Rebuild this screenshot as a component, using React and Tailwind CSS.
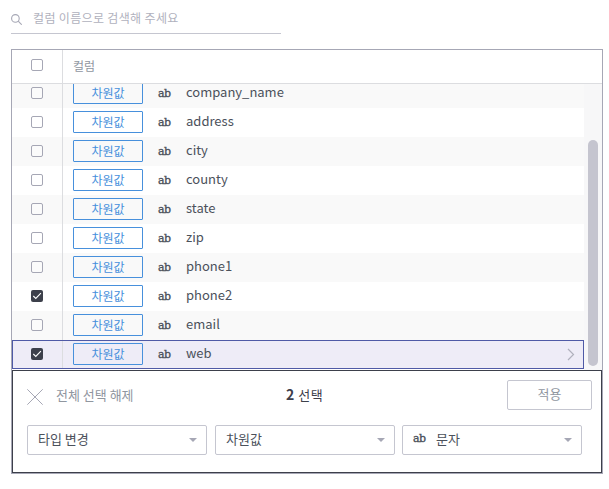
const columns = [
  { name: 'company_name' },
  { name: 'address' },
  { name: 'city' },
  { name: 'county' },
  { name: 'state' },
  { name: 'zip' },
  { name: 'phone1' },
  { name: 'phone2', checked: true },
  { name: 'email' },
  { name: 'web', checked: true, selected: true },
];

function Checkbox({ checked }) {
  if (checked) {
    return (
      <span className="flex size-3 items-center justify-center rounded-xs bg-[#3d404b]">
        <svg width="10" height="8" viewBox="0 0 10 8" fill="none" stroke="#fff" strokeWidth="1.1">
          <path d="M1.3 4 3.8 6.4 8.9 1.2" />
        </svg>
      </span>
    );
  }
  return <span className="block size-3 rounded-xs border border-[#a6a7b5] bg-white/40" />;
}

function TextTypeIcon() {
  return (
    <span className="block w-[14px] whitespace-nowrap font-['DejaVu_Serif',serif] text-[11px] leading-[14px] tracking-[-0.5px] text-[#4b515b] [-webkit-text-stroke:0.35px_#4b515b]">
      ab
    </span>
  );
}

function Row({ name, checked, selected }) {
  return (
    <div
      className={
        selected
          ? 'relative flex h-[29px] shrink-0 bg-[#eeecf7]'
          : 'flex h-[29px] shrink-0 odd:bg-[#f9f9f9]'
      }
    >
      <div className="flex w-[51px] justify-center border-r border-[#dcdde0] pt-2">
        <Checkbox checked={checked} />
      </div>
      <div className="flex flex-1 items-start pl-[10px]">
        <div className="mt-[3px] h-[22px] w-[70px] rounded-[1px] border border-[#4790dc] text-center text-[12px] leading-[19px] text-[#4790dc]">
          차원값
        </div>
        <div className="mt-[8px] ml-[15px]">
          <TextTypeIcon />
        </div>
        <div className="ml-[14px] text-[13px] leading-[25px] text-[#4b515b]">{name}</div>
        {selected && (
          <svg className="mt-[8px] mr-[9px] ml-auto" width="8" height="13" viewBox="0 0 8 13" fill="none" stroke="#b0b1bd" strokeWidth="1.2">
            <path d="M1 1 6.5 6.5 1 12" />
          </svg>
        )}
      </div>
      {selected && <div className="pointer-events-none absolute inset-0 border border-[#4f5aa6]" />}
    </div>
  );
}

function Select({ children, className = '' }) {
  return (
    <div className={`flex h-[30px] w-[180px] items-center rounded-xs border border-[#c5c6d0] bg-white pr-[9px] pb-[2px] pl-[10px] text-[13px] text-[#4b515b] ${className}`}>
      {children}
      <svg className="mt-[2px] ml-auto" width="8" height="4" viewBox="0 0 8 4" fill="#a6a7b5">
        <path d="M0 0h8L4 4z" />
      </svg>
    </div>
  );
}

export default function App() {
  return (
    <div className="h-[489px] w-[609px] overflow-hidden bg-white pl-[11px] font-['Noto_Sans_CJK_KR',sans-serif]">
      <div className="flex h-[34px] w-[270px] border-b border-[#c5c6d0]">
        <svg className="mt-[14px]" width="11" height="11" viewBox="0 0 11 11" fill="none" stroke="#a6a7b5" strokeWidth="1.1">
          <circle cx="4.4" cy="4.4" r="3.8" />
          <path d="m7.2 7.2 3.5 3.5" />
        </svg>
        <span className="mt-[8px] ml-[11px] text-[12px] leading-[20px] tracking-[0.34px] text-[#b0b1bd]">컬럼 이름으로 검색해 주세요</span>
      </div>

      <div className="mt-[15px] flex h-[425px] w-[592px] flex-col border border-[#a6a7b5]">
        <div className="flex h-[34px] shrink-0 border-b border-[#dcdde0]">
          <div className="flex w-[51px] justify-center border-r border-[#dcdde0] pt-[9px]">
            <Checkbox />
          </div>
          <span className="pt-[6px] pl-[10px] text-[12px] leading-[20px] text-[#90969f]">컬럼</span>
        </div>

        <div className="flex h-[286px] shrink-0 overflow-hidden">
          <div className="-mt-[5px] flex w-[572px] flex-col">
            {columns.map((column) => (
              <Row key={column.name} {...column} />
            ))}
          </div>
          <div className="w-[18px] bg-[#f7f7f8] pt-[56px] pl-1">
            <div className="h-[226px] w-[10px] rounded-full bg-[#c5c5cf]" />
          </div>
        </div>

        <div className="h-[103px] shrink-0 border border-[#3d404b] bg-white">
          <div className="flex items-start pl-[14px]">
            <svg className="mt-[18px]" width="16" height="16" viewBox="0 0 16 16" fill="none" stroke="#a6a7b5" strokeWidth="1">
              <path d="m.3.3 15.4 15.4M15.7.3.3 15.7" />
            </svg>
            <span className="mt-[14px] ml-[13px] w-[230px] text-[13px] leading-[20px] text-[#90969f]">전체 선택 해제</span>
            <span className="mt-[13px] w-[221px] text-[13px] leading-[20px] tracking-[0.5px] text-[#3d404b]">
              <b className="text-[14px]">2</b> 선택
            </span>
            <button className="mt-[9px] h-[30px] w-[85px] rounded-xs border border-[#c5c6d0] pb-[3px] text-[13px] leading-[25px] text-[#90969f]">
              적용
            </button>
          </div>
          <div className="mt-[15px] flex pl-[14px]">
            <Select>타입 변경</Select>
            <Select className="ml-2">차원값</Select>
            <Select className="ml-[7px]">
              <TextTypeIcon />
              <span className="ml-[9px]">문자</span>
            </Select>
          </div>
        </div>
      </div>
    </div>
  );
}
